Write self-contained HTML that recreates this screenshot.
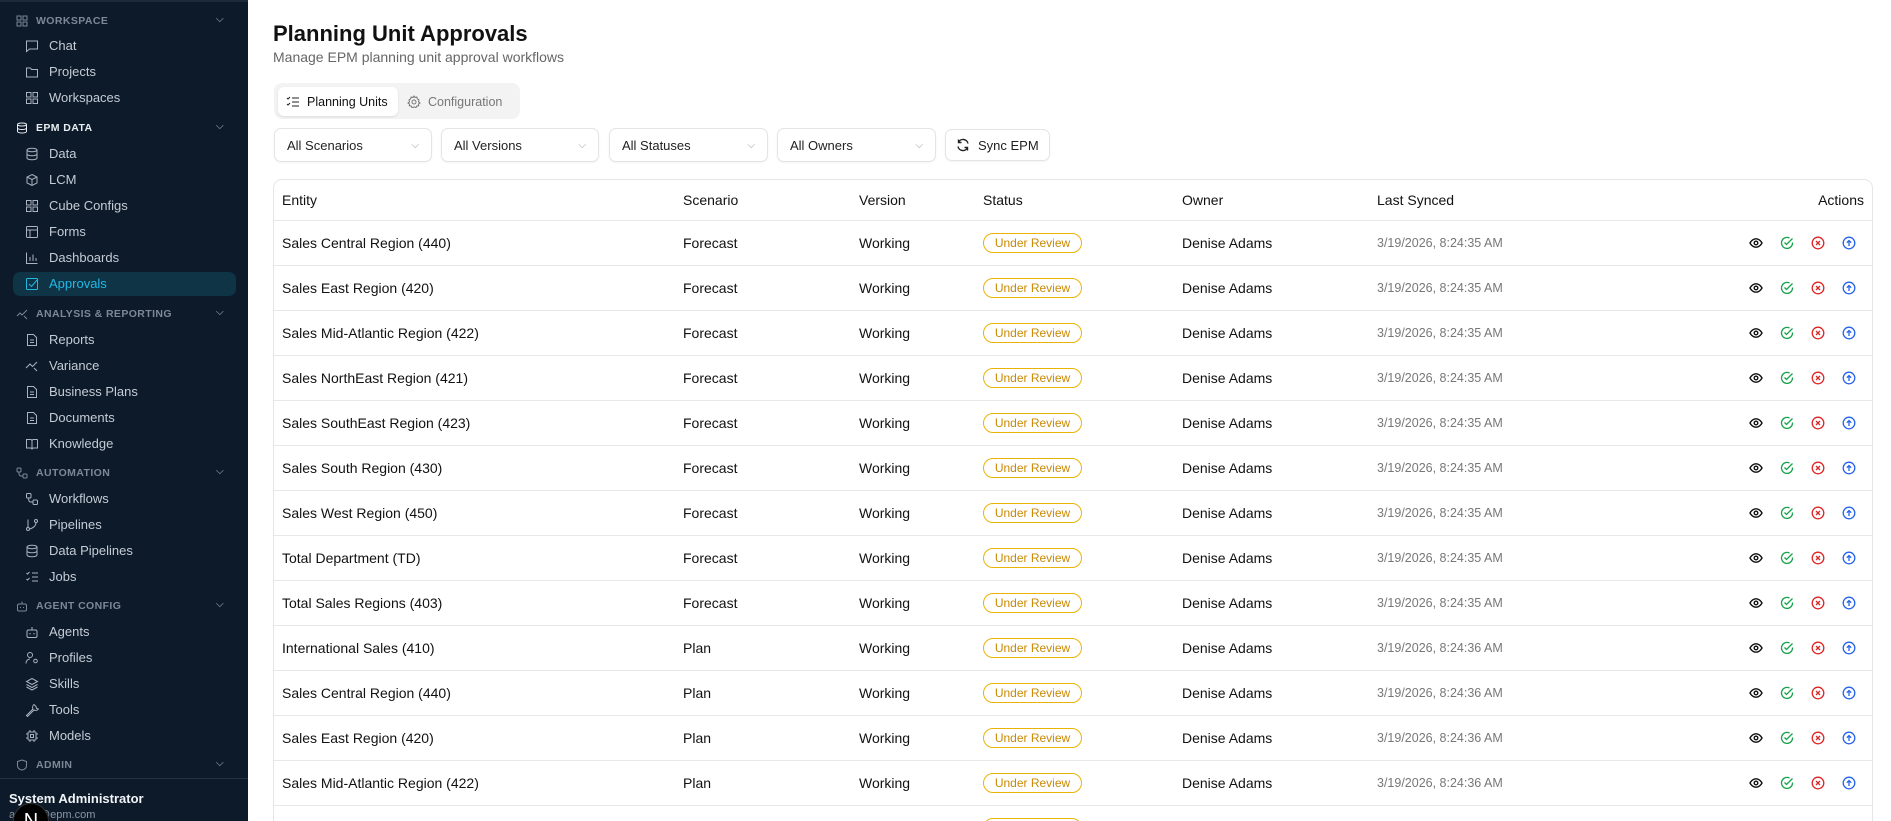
<!DOCTYPE html>
<html><head><meta charset="utf-8"><style>
*{box-sizing:border-box;margin:0;padding:0}
html,body{width:1891px;height:821px;overflow:hidden}
body{font-family:"Liberation Sans",sans-serif;background:#fff;position:relative}
#wrap{position:absolute;left:0;top:0;width:1891px;height:821px;overflow:hidden}
#sb{position:absolute;left:0;top:0;width:248px;height:821px;background:#0c1a29;color:#c9d1db;overflow:hidden}
.sec{position:absolute;left:16px;font-size:10.5px;font-weight:bold;letter-spacing:.4px;color:#7d8896;display:flex;align-items:center;width:208px}
.sec svg{margin-right:8px}
.sec .ch{position:absolute;right:0;top:-1px;color:#6b7684;font-size:10px}
.it{position:absolute;left:25px;font-size:13px;color:#c5ccd6;display:flex;align-items:center}
.it svg{margin-right:10px}
.act{position:absolute;left:13px;top:272px;width:223px;height:24px;border-radius:7px;background:#0e3446}
.abs{position:absolute}
.sel{position:absolute;top:128px;height:34px;border:1px solid #e2e4e8;border-radius:7px;font-size:13px;color:#222;padding:0 12px;display:flex;align-items:center;justify-content:space-between;box-shadow:0 1px 2px rgba(0,0,0,.05);white-space:nowrap}
#tw{position:absolute;left:273px;top:179px;width:1600px;height:660px;border:1px solid #e4e6ea;border-radius:9px;overflow:hidden}
table{width:1598px;border-collapse:collapse}
td,th{font-size:14px;color:#111;text-align:left;font-weight:normal;height:45px;border-bottom:1px solid #e6e8eb;padding:0;white-space:nowrap}
th{height:40px}
td.ts{color:#777;font-size:12.5px}
.bd{display:inline-block;border:1px solid #eab308;color:#ca8a04;border-radius:11px;font-size:12px;padding:2px 0;width:99px;text-align:center}
.ic{display:flex;justify-content:flex-end;gap:17px;padding-right:16px}
</style></head><body><div id="wrap">
<div id="sb">
<div style="position:absolute;left:0;top:0;width:248px;height:2px;background:#1c2a3a"></div>
<div class="sec" style="top:15px"><svg width="12" height="12" viewBox="0 0 12 12" fill="none" stroke="#7d8896"><rect x="1" y="1" width="4" height="4"/><rect x="7" y="1" width="4" height="4"/><rect x="1" y="7" width="4" height="4"/><rect x="7" y="7" width="4" height="4"/></svg>WORKSPACE<span class="ch">⌵</span></div>
<div class="it" style="top:38px"><svg width="14" height="14" viewBox="0 0 14 14" fill="none" stroke="#aab3bf"><path d="M1.5 2h11v8h-8l-3 2.5z"/></svg>Chat</div>
<div class="it" style="top:64px"><svg width="14" height="14" viewBox="0 0 14 14" fill="none" stroke="#aab3bf"><path d="M1.5 3h4l1 1.5h6v7.5h-11z"/></svg>Projects</div>
<div class="it" style="top:90px"><svg width="14" height="14" viewBox="0 0 14 14" fill="none" stroke="#aab3bf"><rect x="1.5" y="1.5" width="4.5" height="4.5"/><rect x="8" y="1.5" width="4.5" height="4.5"/><rect x="1.5" y="8" width="4.5" height="4.5"/><rect x="8" y="8" width="4.5" height="4.5"/></svg>Workspaces</div>
<div class="sec" style="top:122px;color:#e8edf2"><svg width="12" height="12" viewBox="0 0 12 12" fill="none" stroke="#e8edf2"><ellipse cx="6" cy="2.5" rx="4.5" ry="1.5"/><path d="M1.5 2.5v7c0 .8 2 1.5 4.5 1.5s4.5-.7 4.5-1.5v-7M1.5 6c0 .8 2 1.5 4.5 1.5s4.5-.7 4.5-1.5"/></svg>EPM DATA<span class="ch">⌵</span></div>
<div class="it" style="top:146px"><svg width="14" height="14" viewBox="0 0 14 14" fill="none" stroke="#aab3bf"><ellipse cx="7" cy="3" rx="5" ry="1.8"/><path d="M2 3v8c0 1 2.2 1.8 5 1.8s5-.8 5-1.8V3M2 7c0 1 2.2 1.8 5 1.8s5-.8 5-1.8"/></svg>Data</div>
<div class="it" style="top:172px"><svg width="14" height="14" viewBox="0 0 14 14" fill="none" stroke="#aab3bf"><path d="M7 1.5l5 2.5v6l-5 2.5-5-2.5V4zM2 4l5 2.5L12 4M7 6.5v6"/></svg>LCM</div>
<div class="it" style="top:198px"><svg width="14" height="14" viewBox="0 0 14 14" fill="none" stroke="#aab3bf"><rect x="1.5" y="1.5" width="4.5" height="4.5"/><rect x="8" y="1.5" width="4.5" height="4.5"/><rect x="1.5" y="8" width="4.5" height="4.5"/><rect x="8" y="8" width="4.5" height="4.5"/></svg>Cube Configs</div>
<div class="it" style="top:224px"><svg width="14" height="14" viewBox="0 0 14 14" fill="none" stroke="#aab3bf"><rect x="1.5" y="1.5" width="11" height="11" rx="1"/><path d="M1.5 5h11M5 5v7.5"/></svg>Forms</div>
<div class="it" style="top:250px"><svg width="14" height="14" viewBox="0 0 14 14" fill="none" stroke="#aab3bf"><path d="M1.5 1.5v11h11M5 10V6M8 10V3.5M11 10V7"/></svg>Dashboards</div>
<div class="act"></div>
<div class="it" style="top:276px;color:#22b8e6"><svg width="14" height="14" viewBox="0 0 14 14" fill="none" stroke="#22b8e6"><rect x="1.5" y="1.5" width="11" height="11" rx="1"/><path d="M4 7l2.5 2.5L12 3"/></svg>Approvals</div>
<div class="sec" style="top:308px"><svg width="12" height="12" viewBox="0 0 12 12" fill="none" stroke="#7d8896"><path d="M1 8l3-3 2 2 5-5M8 8l3 3"/></svg>ANALYSIS &amp; REPORTING<span class="ch">⌵</span></div>
<div class="it" style="top:332px"><svg width="14" height="14" viewBox="0 0 14 14" fill="none" stroke="#aab3bf"><path d="M2.5 1.5h6l3 3v8h-9zM5 7h4M5 9.5h4"/></svg>Reports</div>
<div class="it" style="top:358px"><svg width="14" height="14" viewBox="0 0 14 14" fill="none" stroke="#aab3bf"><path d="M1 9l4-4 2.5 2.5L12 3M9 9l3 3"/></svg>Variance</div>
<div class="it" style="top:384px"><svg width="14" height="14" viewBox="0 0 14 14" fill="none" stroke="#aab3bf"><path d="M2.5 1.5h6l3 3v8h-9zM5 7h4M5 9.5h4"/></svg>Business Plans</div>
<div class="it" style="top:410px"><svg width="14" height="14" viewBox="0 0 14 14" fill="none" stroke="#aab3bf"><path d="M2.5 1.5h6l3 3v8h-9zM5 7h4M5 9.5h4"/></svg>Documents</div>
<div class="it" style="top:436px"><svg width="14" height="14" viewBox="0 0 14 14" fill="none" stroke="#aab3bf"><path d="M1.5 2.5h4c1 0 1.5.5 1.5 1.5v8.5c0-1-.5-1.5-1.5-1.5h-4zM12.5 2.5h-4c-1 0-1.5.5-1.5 1.5M12.5 2.5v8.5h-4c-1 0-1.5.5-1.5 1.5"/></svg>Knowledge</div>
<div class="sec" style="top:467px"><svg width="12" height="12" viewBox="0 0 12 12" fill="none" stroke="#7d8896"><rect x="1" y="1" width="4" height="4" rx="1"/><rect x="7" y="7" width="4" height="4" rx="1"/><path d="M3 5v2c0 1 1 2 2 2h2"/></svg>AUTOMATION<span class="ch">⌵</span></div>
<div class="it" style="top:491px"><svg width="14" height="14" viewBox="0 0 14 14" fill="none" stroke="#aab3bf"><rect x="1.5" y="1.5" width="4.5" height="4.5" rx="1"/><rect x="8" y="8" width="4.5" height="4.5" rx="1"/><path d="M3.7 6v2c0 1 1 2 2 2H8"/></svg>Workflows</div>
<div class="it" style="top:517px"><svg width="14" height="14" viewBox="0 0 14 14" fill="none" stroke="#aab3bf"><circle cx="3" cy="11" r="1.5"/><circle cx="11" cy="3" r="1.5"/><path d="M3 1.5v8M11 4.5c0 4-4 6-6.5 6.5"/></svg>Pipelines</div>
<div class="it" style="top:543px"><svg width="14" height="14" viewBox="0 0 14 14" fill="none" stroke="#aab3bf"><ellipse cx="7" cy="3" rx="5" ry="1.8"/><path d="M2 3v8c0 1 2.2 1.8 5 1.8s5-.8 5-1.8V3M2 7c0 1 2.2 1.8 5 1.8s5-.8 5-1.8"/></svg>Data Pipelines</div>
<div class="it" style="top:569px"><svg width="14" height="14" viewBox="0 0 14 14" fill="none" stroke="#aab3bf"><path d="M1.5 3l1 1 2-2M1.5 9l1 1 2-2M7 3h6M7 7h6M7 11h6"/></svg>Jobs</div>
<div class="sec" style="top:600px"><svg width="12" height="12" viewBox="0 0 12 12" fill="none" stroke="#7d8896"><rect x="1.5" y="4" width="9" height="7" rx="1.5"/><path d="M6 1.5V4M4.5 7v1M7.5 7v1"/></svg>AGENT CONFIG<span class="ch">⌵</span></div>
<div class="it" style="top:624px"><svg width="14" height="14" viewBox="0 0 14 14" fill="none" stroke="#aab3bf"><rect x="2" y="5" width="10" height="7.5" rx="1.5"/><path d="M7 2v3M5 8v1.5M9 8v1.5"/></svg>Agents</div>
<div class="it" style="top:650px"><svg width="14" height="14" viewBox="0 0 14 14" fill="none" stroke="#aab3bf"><circle cx="5" cy="4" r="2.5"/><path d="M1 12.5c0-3 2-4.5 4-4.5"/><circle cx="10.5" cy="10" r="1.8"/></svg>Profiles</div>
<div class="it" style="top:676px"><svg width="14" height="14" viewBox="0 0 14 14" fill="none" stroke="#aab3bf"><path d="M7 1.5l5.5 3L7 7.5 1.5 4.5zM1.5 7.5L7 10.5l5.5-3M1.5 10L7 13l5.5-3"/></svg>Skills</div>
<div class="it" style="top:702px"><svg width="14" height="14" viewBox="0 0 14 14" fill="none" stroke="#aab3bf"><path d="M9 1.5a3.5 3.5 0 0 0-1 4.5L1.5 12.5l1 1L9 7a3.5 3.5 0 0 0 4.5-1l-2-.5-.5-2z"/></svg>Tools</div>
<div class="it" style="top:728px"><svg width="14" height="14" viewBox="0 0 14 14" fill="none" stroke="#aab3bf"><rect x="3" y="3" width="8" height="8" rx="1"/><rect x="5.5" y="5.5" width="3" height="3"/><path d="M5 1v2M9 1v2M5 11v2M9 11v2M1 5h2M1 9h2M11 5h2M11 9h2"/></svg>Models</div>
<div class="sec" style="top:759px"><svg width="12" height="12" viewBox="0 0 12 12" fill="none" stroke="#7d8896"><path d="M6 1l4.5 1.5v4c0 2.5-2 4-4.5 4.5C3.5 10.5 1.5 9 1.5 6.5v-4z"/></svg>ADMIN<span class="ch">⌵</span></div>
<div style="position:absolute;left:0;top:778px;width:248px;height:1px;background:#24313f"></div>
<div style="position:absolute;left:9px;top:791px;font-size:13px;font-weight:bold;color:#f1f4f7">System Administrator</div>
<div style="position:absolute;left:9px;top:809px;font-size:11px;color:#8a95a2">admin@epm.com</div>
<div style="position:absolute;left:13px;top:803px;width:36px;height:36px;border-radius:50%;background:#000;border:1px solid #333;color:#fff;font-size:20px;text-align:center;line-height:34px">N</div>
</div>

<div class="abs" style="left:273px;top:21px;font-size:22px;font-weight:bold;color:#111">Planning Unit Approvals</div>
<div class="abs" style="left:273px;top:49px;font-size:14px;color:#666">Manage EPM planning unit approval workflows</div>
<div class="abs" style="left:274px;top:83px;width:246px;height:36px;background:#f3f3f4;border-radius:8px"></div>
<div class="abs" style="left:278px;top:87px;width:120px;height:29px;background:#fff;border-radius:6px;box-shadow:0 1px 2px rgba(0,0,0,.1);font-size:12.5px;color:#111;display:flex;align-items:center;padding-left:8px"><svg width="14" height="12" viewBox="0 0 14 12" fill="none" stroke="#222" style="margin-right:7px"><path d="M1 2l1 1 2-2M1 8l1 1 2-2M6 2h7M6 6h7M6 10h7"/></svg>Planning Units</div>
<div class="abs" style="left:407px;top:87px;height:29px;font-size:12.5px;color:#777;display:flex;align-items:center"><svg width="14" height="14" viewBox="0 0 14 14" fill="none" stroke="#777" style="margin-right:7px"><circle cx="7" cy="7" r="2"/><path d="M7 1l1 1.5 1.8-.5.5 1.8L12 5l-.5 1.8L13 8l-1.5 1 .2 1.8-1.8.2L9 12.5 7 12l-2 .5-.9-1.5-1.8-.2.2-1.8L1 8l1.5-1.2L2 5l1.7-1.2L4.2 2 6 2.5z"/></svg>Configuration</div>

<div class="sel" style="left:274px;width:158px">All Scenarios<span style="color:#999;font-size:10px">⌵</span></div>
<div class="sel" style="left:441px;width:158px">All Versions<span style="color:#999;font-size:10px">⌵</span></div>
<div class="sel" style="left:609px;width:159px">All Statuses<span style="color:#999;font-size:10px">⌵</span></div>
<div class="sel" style="left:777px;width:159px">All Owners<span style="color:#999;font-size:10px">⌵</span></div>
<div class="sel" style="left:945px;width:105px;top:129px;height:32px;justify-content:flex-start;padding:0 10px"><svg width="14" height="14" viewBox="0 0 14 14" fill="none" stroke="#222" stroke-width="1.4" style="margin-right:8px;flex:none"><path d="M12 5.5A5 5 0 0 0 2.5 4.5M2 8.5a5 5 0 0 0 9.5 1M2.5 1.5v3h3M11.5 12.5v-3h-3"/></svg>Sync EPM</div>

<div id="tw"><table>
<colgroup><col style="width:409px"><col style="width:176px"><col style="width:124px"><col style="width:199px"><col style="width:195px"><col style="width:310px"><col></colgroup>
<tr><th style="padding-left:8px">Entity</th><th>Scenario</th><th>Version</th><th>Status</th><th>Owner</th><th>Last Synced</th><th style="text-align:right;padding-right:8px">Actions</th></tr>
</table></div>
</div>
<script>
const rows=[["Sales Central Region (440)","Forecast",5],["Sales East Region (420)","Forecast",5],["Sales Mid-Atlantic Region (422)","Forecast",5],["Sales NorthEast Region (421)","Forecast",5],["Sales SouthEast Region (423)","Forecast",5],["Sales South Region (430)","Forecast",5],["Sales West Region (450)","Forecast",5],["Total Department (TD)","Forecast",5],["Total Sales Regions (403)","Forecast",5],["International Sales (410)","Plan",6],["Sales Central Region (440)","Plan",6],["Sales East Region (420)","Plan",6],["Sales Mid-Atlantic Region (422)","Plan",6],["Sales NorthEast Region (421)","Plan",6]];
const ic='<svg width="14" height="14" viewBox="0 0 14 14" fill="none" stroke="#111" stroke-width="1.4"><path d="M1 7s2.2-4.2 6-4.2S13 7 13 7s-2.2 4.2-6 4.2S1 7 1 7z"/><circle cx="7" cy="7" r="1.8"/></svg><svg width="14" height="14" viewBox="0 0 14 14" fill="none" stroke="#16a34a" stroke-width="1.3"><path d="M12.5 6.5A5.5 5.5 0 1 1 9.5 2"/><path d="M4.5 6.5l2 2L12.5 2.5"/></svg><svg width="14" height="14" viewBox="0 0 14 14" fill="none" stroke="#dc2626" stroke-width="1.3"><circle cx="7" cy="7" r="5.8"/><path d="M5 5l4 4M9 5l-4 4"/></svg><svg width="14" height="14" viewBox="0 0 14 14" fill="none" stroke="#2563eb" stroke-width="1.3"><circle cx="7" cy="7" r="5.8"/><path d="M7 10V4.5M4.8 6.7L7 4.5l2.2 2.2"/></svg>';
const t=document.querySelector('table');
rows.forEach(r=>{const tr=document.createElement('tr');tr.innerHTML=`<td style="padding-left:8px">${r[0]}</td><td>${r[1]}</td><td>Working</td><td><span class="bd">Under Review</span></td><td>Denise Adams</td><td class="ts">3/19/2026, 8:24:3${r[2]} AM</td><td><div class="ic">${ic}</div></td>`;t.appendChild(tr);});
</script>
</body></html>
